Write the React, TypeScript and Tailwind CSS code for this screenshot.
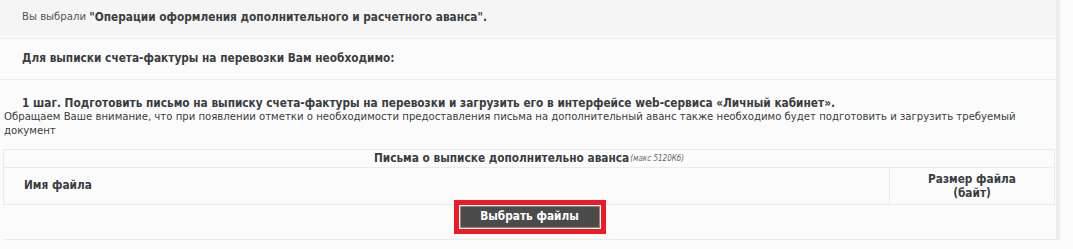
import React from "react";

const font = { fontFamily: "'DejaVu Sans Condensed', 'DejaVu Sans', sans-serif" };

export default function App() {
  return (
    <div className="w-[1073px] h-[249px] bg-[#fbfbfb] text-[11.75px] text-[#3a3d40]" style={font}>
      <div className="w-[1060px] border-r-4 border-[#ececec]">
        {/* Selected operation */}
        <div className="h-[35px] bg-[#f5f5f5] pl-[22px] flex items-center">
          <span className="text-[#555] text-[11.25px]">Вы выбрали&nbsp;</span>
          <b>"Операции оформления дополнительного и расчетного аванса".</b>
        </div>

        {/* Intro */}
        <div className="mt-[3px] h-[42px] border-y border-[#eeeeee] pl-[22px] flex items-center font-bold">
          Для выписки счета-фактуры на перевозки Вам необходимо:
        </div>

        {/* Step 1 */}
        <div className="mt-[2px] pt-[14px] px-[4px]">
          <div className="font-bold indent-[18px] leading-[14px]">
            1 шаг. Подготовить письмо на выписку счета-фактуры на перевозки и загрузить его в интерфейсе web-сервиса «Личный кабинет».
          </div>
          <div className="leading-[14px] pr-[20px] text-[11.25px]">
            Обращаем Ваше внимание, что при появлении отметки о необходимости предоставления письма на дополнительный аванс также необходимо будет подготовить и загрузить требуемый документ
          </div>
        </div>

        {/* Files table */}
        <div className="mt-[11px] ml-[3px] mr-[1px] border border-[#ebebeb]">
          <div className="h-[18px] border-b border-[#ebebeb] flex items-center justify-center font-bold">
            Письма о выписке дополнительно аванса
            <span className="font-normal italic text-[8px] ml-[1px] text-[#666]">(макс 5120Кб)</span>
          </div>
          <div className="flex h-[36px]">
            <div className="flex-1 flex items-center pl-[20px] font-bold">Имя файла</div>
            <div className="w-[165px] border-l border-[#ebebeb] flex items-center justify-center text-center font-bold leading-[14px]">
              Размер файла
              <br />
              (байт)
            </div>
          </div>
        </div>

        {/* Button row */}
        <div className="h-[35px] ml-[3px] border-b border-[#ebebeb] flex justify-center items-start">
          <div className="mt-[-5px] border-[5px] border-[#ed1c24] p-[1px] bg-white">
            <button className="block w-[140px] h-[22px] bg-[#4b4b4b] border border-[#8a8a8a] text-white font-bold text-[11.75px]" style={font}>
              Выбрать файлы
            </button>
          </div>
        </div>
      </div>
    </div>
  );
}
